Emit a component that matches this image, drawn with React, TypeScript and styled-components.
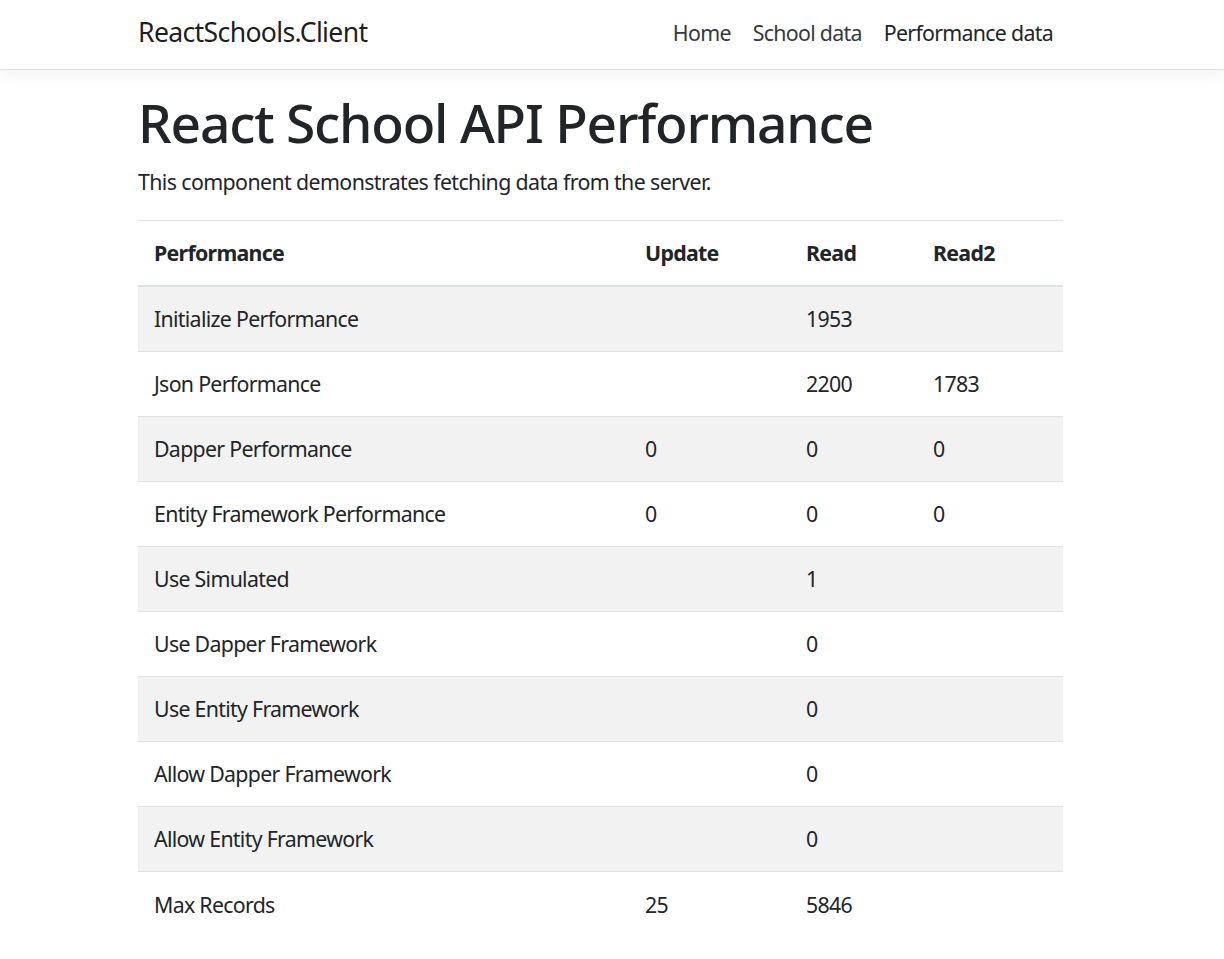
import React from "react";
import styled, { createGlobalStyle } from "styled-components";

const Global = createGlobalStyle`
  html, body { margin: 0; padding: 0; background: #fff; }
  body {
    font-family: "Noto Sans", "Open Sans", sans-serif;
    font-size: 21.33px;
    line-height: 1.5;
    color: #212529;
  }
  * { box-sizing: border-box; }
`;

const NavBar = styled.header`
  height: 70px;
  background: #fff;
  border-bottom: 1px solid #dee2e6;
  box-shadow: 0 5px 16px rgba(0, 0, 0, 0.05);
  margin-bottom: 21px;
`;

const NavInner = styled.nav`
  width: 925px;
  margin: 0 0 0 138px;
  height: 100%;
  display: flex;
  align-items: center;
  justify-content: space-between;
  padding-bottom: 4px;
`;

const Brand = styled.a`
  font-size: 26.6px;
  color: rgba(0, 0, 0, 0.9);
  text-decoration: none;
  letter-spacing: -0.65px;
`;

const Links = styled.ul`
  display: flex;
  list-style: none;
  margin: 0 10px 0 0;
  padding: 0;
  gap: 22px;
`;

const NavLink = styled.a<{ $active?: boolean }>`
  font-size: 21.33px;
  color: ${(p) => (p.$active ? "#212529" : "#343a40")};
  text-decoration: none;
  letter-spacing: -0.7px;
`;

const Main = styled.main`
  width: 925px;
  margin: 0 0 0 138px;
`;

const Title = styled.h1`
  font-size: 53.3px;
  font-weight: 500;
  line-height: 1.2;
  margin: 2px 0 11px 0;
  letter-spacing: -1.2px;
`;

const Lead = styled.p`
  margin: 0 0 22px 0;
  letter-spacing: -0.6px;
`;

const Table = styled.table`
  width: 100%;
  border-collapse: collapse;
  table-layout: fixed;
`;

const HeadCell = styled.th<{ $w: number }>`
  width: ${(p) => p.$w}px;
  text-align: left;
  font-weight: 700;
  padding: 16px;
  height: 66px;
  border-top: 1px solid #dee2e6;
  border-bottom: 2px solid #dee2e6;
  vertical-align: middle;
  letter-spacing: -0.7px;
`;

const Row = styled.tr<{ $striped: boolean }>`
  background: ${(p) => (p.$striped ? "#f2f2f2" : "transparent")};
`;

const Cell = styled.td`
  padding: 16px;
  height: 65px;
  border-top: 1px solid #dee2e6;
  vertical-align: middle;
  letter-spacing: -0.7px;
`;

const rows: [string, string, string, string][] = [
  ["Initialize Performance", "", "1953", ""],
  ["Json Performance", "", "2200", "1783"],
  ["Dapper Performance", "0", "0", "0"],
  ["Entity Framework Performance", "0", "0", "0"],
  ["Use Simulated", "", "1", ""],
  ["Use Dapper Framework", "", "0", ""],
  ["Use Entity Framework", "", "0", ""],
  ["Allow Dapper Framework", "", "0", ""],
  ["Allow Entity Framework", "", "0", ""],
  ["Max Records", "25", "5846", ""],
];

export default function App() {
  return (
    <>
      <Global />
      <NavBar>
        <NavInner>
          <Brand href="#">ReactSchools.Client</Brand>
          <Links>
            <li><NavLink href="#">Home</NavLink></li>
            <li><NavLink href="#">School data</NavLink></li>
            <li><NavLink href="#" $active>Performance data</NavLink></li>
          </Links>
        </NavInner>
      </NavBar>
      <Main>
        <Title>React School API Performance</Title>
        <Lead>This component demonstrates fetching data from the server.</Lead>
        <Table>
          <thead>
            <tr>
              <HeadCell $w={491}>Performance</HeadCell>
              <HeadCell $w={161}>Update</HeadCell>
              <HeadCell $w={127}>Read</HeadCell>
              <HeadCell $w={146}>Read2</HeadCell>
            </tr>
          </thead>
          <tbody>
            {rows.map((r, i) => (
              <Row key={r[0]} $striped={i % 2 === 0}>
                {r.map((c, j) => (
                  <Cell key={j}>{c}</Cell>
                ))}
              </Row>
            ))}
          </tbody>
        </Table>
      </Main>
    </>
  );
}
